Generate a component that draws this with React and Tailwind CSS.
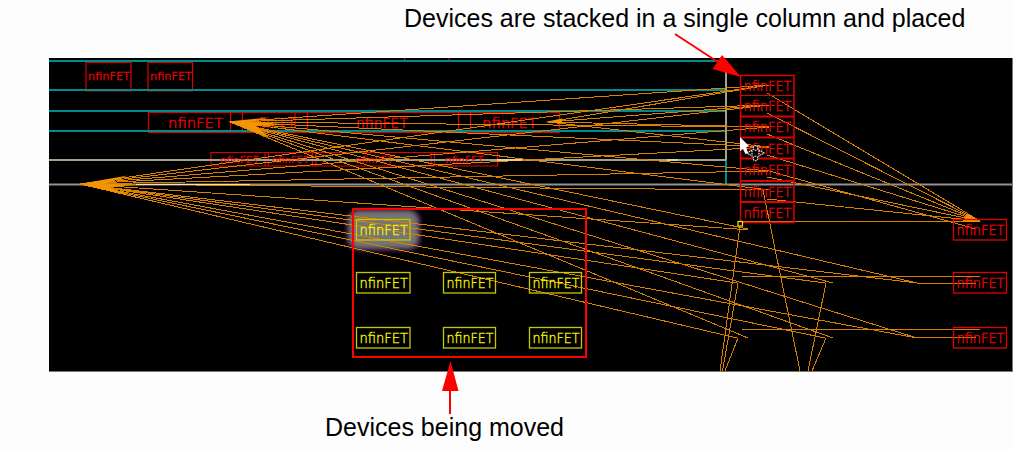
const RED = "#e00000";
const ORANGE = "#d88000";

// Flight lines fan out from two pins on the left and one in the second row.
const rowEnds = [85, 105, 127, 147, 171, 190].map((y) => [769, y]);
const farPins = [[737, 229], [737, 283], [825, 283], [917, 283], [737, 338], [825, 338], [917, 338]];
const farPinsB = [[748, 229], [833, 283], [917, 283], [748, 338], [833, 338], [917, 338]];

const flights = [
  ...[...rowEnds, ...farPins].map(([x, y]) => [80, 184, x, y]),
  ...[...rowEnds, ...farPinsB].map(([x, y]) => [230, 122, x, y]),
  ...rowEnds.slice(0, 4).map(([x, y]) => [548, 122, x, y]),
  ...[93, 113, 134, 155, 177, 199].map((y) => [767, y, 980, 221]),
  [769, 171, 976, 229],
  [740, 221.5, 980, 221.5],
  [742, 276.5, 980, 276.5],
  [917, 283.5, 976, 283.5],
  [742, 329.5, 980, 329.5],
  [917, 337.5, 976, 337.5],
  [737, 229, 748, 229],
  [740, 226, 720, 371],
  [738, 283, 722.5, 371],
  [738, 338, 725, 371],
  [763, 190, 800, 371],
  [826, 283, 808, 371],
  [826, 338, 812, 371],
];

function Label({ x, y, w = 47, size = 13.5, color = "#f40000" }) {
  return (
    <text
      x={x}
      y={y}
      fill={color}
      stroke={color}
      strokeWidth="0.35"
      fontSize={size}
      fontWeight="200"
      fontFamily="'DejaVu Sans', sans-serif"
      textLength={w}
      lengthAdjust="spacingAndGlyphs"
    >
      nfinFET
    </text>
  );
}

function Device({ x, y, w = 53, h = 20.5, color = RED }) {
  return (
    <g>
      <rect x={x} y={y} width={w} height={h} fill="none" stroke={color} strokeWidth="1.3" />
      <Label x={x + 3} y={y + 15} w={w - 5} color={color === RED ? "#f40000" : "#f4f400"} />
    </g>
  );
}

function Layout() {
  return (
    <svg className="block" width="964" height="314" viewBox="49 58 964 314">
      <rect x="49" y="58" width="963" height="313" fill="#000" />
      <path d="M1012.5 58V371.5M49 371.5H1013" stroke="#777" />
      <defs>
        <filter id="soft" x="-20%" y="-30%" width="140%" height="160%">
          <feGaussianBlur stdDeviation="2" />
        </filter>
      </defs>
      <rect x="346" y="209" width="75" height="42" rx="12" fill="#3b2048" filter="url(#soft)" />
      <rect x="349" y="211" width="69" height="37" rx="10" fill="#747474" filter="url(#soft)" />

      <g stroke={RED} fill="none" strokeWidth="1.2">
        <path d="M86 62.5H131V91H86ZM148 62.5H192.500V91H148Z" />
        <path d="M148.500 112.500H559.500V132.500H148.500ZM230.500 112V132M242.500 112V132M295 112V132M307.500 112V132M458.500 112V132M470.500 112V132" />
        <path d="M211 152.500H497.500V166H211ZM265 152V166M268.500 152V166M312.500 152V166M316 152V166M431 152V166M434.500 152V166" />
        <path d="M404.500 58V60M449 58V60" />
      </g>

      <g strokeWidth="2" fill="none">
        <path d="M49 61H726M49 90H726M49 111H726M49 131H726M726 160V185" stroke="#008c8c" />
        <path d="M49 160H726M726 61V160" stroke="#a3a38c" />
        <path d="M49 184.500H1012" stroke="#929292" />
      </g>
      <Label x={88} y={80} w={42} size={10.500} />
      <Label x={150} y={80} w={42} size={10.500} />
      <Label x={168} y={128} w={55} />
      <Label x={251} y={128} w={44} />
      <Label x={356} y={128} w={52} />
      <Label x={482} y={128} w={55} />
      <Label x={220} y={163} w={39} size={9.500} />
      <Label x={272} y={163} w={37} size={9.500} />
      <Label x={355} y={163} w={38} size={9.500} />
      <Label x={445} y={163} w={39} size={9.500} />

      <g stroke={ORANGE} strokeWidth="1" fill="none" shapeRendering="crispEdges">
        {flights.map(([a, b, c, d], i) => (
          <line key={i} x1={a} y1={b} x2={c} y2={d} />
        ))}
      </g>
      <g fill="#f59300">
        <path d="M79 184L128 175.500L104 184L136 185L108 187L130 195.500Z" />
        <path d="M228 121.500L270 117.500L250 122L282 124L256 126L270 138Z" />
        <path d="M545 122L562 118.500L562 123.500Z" />
        <path d="M981 221.500L962 221.500L968 214Z" />
      </g>
      <path d="M136 184.500H250" stroke="#ffe0a8" strokeWidth="1" />
      <path d="M497 160H522M667 160H678" stroke="#f5e2b4" strokeWidth="1.500" />

      <g stroke={RED} fill="none">
        <path d="M740.500 75.500H794V222.500H740.500Z" strokeWidth="1.5" />
        <path d="M740 95.500H794" />
        <path d="M740 116.500H794M740 137.500H794M740 158.500H794M740 181H794M740 202H794" strokeWidth="2" />
      </g>
      {[91, 111, 132, 154, 175, 197, 218].map((y) => (
        <Label key={y} x={743.500} y={y} w={48} />
      ))}
      {[219.500, 272.500, 327.500].map((y) => (
        <Device key={y} x={953.500} y={y} />
      ))}

      {[219.500, 272.500, 327.500].map((y, r) =>
        [356.500, 443.500, 529.500]
          .filter((_, c) => r > 0 || c === 0)
          .map((x) => <Device key={x} x={x} y={y} w={x > 400 ? 52 : 53.500} color="#c8c800" />)
      )}
      <rect x="353" y="209" width="233" height="148" fill="none" stroke="#f00" strokeWidth="2" />
      <rect x="738" y="221.500" width="4.500" height="4.500" fill="#000" stroke="#ee0" strokeWidth="1.200" />

      <g transform="translate(755.500 153)">
        <path d="M-10 -6Q-10 0 -6 1" stroke="#bbb" strokeWidth="1.500" fill="none" />
        <circle cx="0" cy="0" r="3" fill="#000" />
        <g fill="#000" stroke="#ddd" strokeWidth="1.200" strokeDasharray="1.500 0.700">
          <circle cx="0" cy="-5" r="2.300" />
          <circle cx="0" cy="5.500" r="2.300" />
          <path d="M-8.500 0L-3.500 -3V3ZM8.500 0L3.500 -3V3Z" />
        </g>
      </g>
      <path d="M740 137V151L743 149L745.500 154L748 152.500L746 147.500L749 146Z" fill="#fff" />
    </svg>
  );
}

export default function App() {
  return (
    <main className="relative flex h-[452px] w-[1013px] flex-col overflow-hidden bg-[#fdfdfd] text-black">
      <header className="h-[58px] shrink-0 pl-[404px] pt-[2px]">
        <p className="whitespace-nowrap font-['Liberation_Sans',sans-serif] text-[25px] leading-8">
          Devices are stacked in a single column and placed
        </p>
      </header>
      <section className="ml-[49px] shrink-0">
        <Layout />
      </section>
      <footer className="pl-[325px] pt-[39px]">
        <p className="whitespace-nowrap font-['Liberation_Sans',sans-serif] text-[25px] leading-8">
          Devices being moved
        </p>
      </footer>
      <svg className="pointer-events-none absolute inset-0" width="1013" height="452" viewBox="0 0 1013 452">
        <path d="M675 34L724 66M450 414V388" stroke="#f00" strokeWidth="2" fill="none" />
        <path d="M741 77L722 55L712.500 69ZM450.500 361L442 391H458.500Z" fill="#f00" />
      </svg>
    </main>
  );
}
